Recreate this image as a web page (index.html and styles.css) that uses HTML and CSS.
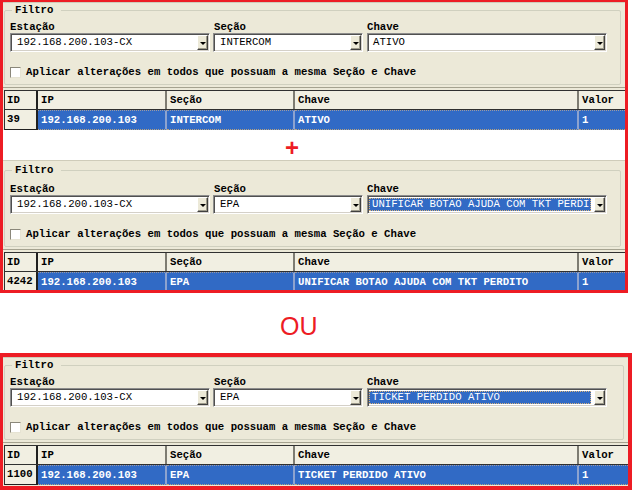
FILE: index.html
```html
<!DOCTYPE html>
<html lang="pt-BR">
<head>
<meta charset="utf-8">
<title>Filtro</title>
<link rel="stylesheet" href="styles.css">
</head>
<body>
<div class="frame frame-top">
  <section class="panel p1">
    <fieldset class="group">
      <legend>Filtro</legend>
      <div class="fields">
        <div class="field est">
          <span class="lbl">Estação</span>
          <div class="combo"><span class="val">192.168.200.103-CX</span><span class="arrow"></span></div>
        </div>
        <div class="field sec">
          <span class="lbl">Seção</span>
          <div class="combo"><span class="val">INTERCOM</span><span class="arrow"></span></div>
        </div>
        <div class="field chave">
          <span class="lbl">Chave</span>
          <div class="combo"><span class="val">ATIVO</span><span class="arrow"></span></div>
        </div>
      </div>
      <div class="check"><span class="box"></span><span>Aplicar alterações em todos que possuam a mesma Seção e Chave</span></div>
    </fieldset>
    <div class="gridwrap">
      <div class="row head"><span>ID</span><span>IP</span><span>Seção</span><span>Chave</span><span>Valor</span></div>
      <div class="row sel"><span>39</span><span>192.168.200.103</span><span>INTERCOM</span><span>ATIVO</span><span>1</span></div>
    </div>
  </section>
  <div class="gap"><span class="plus">+</span></div>
  <section class="panel p2">
    <fieldset class="group">
      <legend>Filtro</legend>
      <div class="fields">
        <div class="field est">
          <span class="lbl">Estação</span>
          <div class="combo"><span class="val">192.168.200.103-CX</span><span class="arrow"></span></div>
        </div>
        <div class="field sec">
          <span class="lbl">Seção</span>
          <div class="combo"><span class="val">EPA</span><span class="arrow"></span></div>
        </div>
        <div class="field chave">
          <span class="lbl">Chave</span>
          <div class="combo"><span class="val focus"><span class="hl">UNIFICAR BOTAO AJUDA COM TKT PERDI</span></span><span class="arrow"></span></div>
        </div>
      </div>
      <div class="check"><span class="box"></span><span>Aplicar alterações em todos que possuam a mesma Seção e Chave</span></div>
    </fieldset>
    <div class="gridwrap">
      <div class="row head"><span>ID</span><span>IP</span><span>Seção</span><span>Chave</span><span>Valor</span></div>
      <div class="row sel"><span>4242</span><span>192.168.200.103</span><span>EPA</span><span>UNIFICAR BOTAO AJUDA COM TKT PERDITO</span><span>1</span></div>
    </div>
  </section>
</div>
<div class="or">OU</div>
<div class="frame frame-bottom">
  <section class="panel p3">
    <fieldset class="group">
      <legend>Filtro</legend>
      <div class="fields">
        <div class="field est">
          <span class="lbl">Estação</span>
          <div class="combo"><span class="val">192.168.200.103-CX</span><span class="arrow"></span></div>
        </div>
        <div class="field sec">
          <span class="lbl">Seção</span>
          <div class="combo"><span class="val">EPA</span><span class="arrow"></span></div>
        </div>
        <div class="field chave">
          <span class="lbl">Chave</span>
          <div class="combo"><span class="val focus"><span class="hl">TICKET PERDIDO ATIVO</span></span><span class="arrow"></span></div>
        </div>
      </div>
      <div class="check"><span class="box"></span><span>Aplicar alterações em todos que possuam a mesma Seção e Chave</span></div>
    </fieldset>
    <div class="gridwrap">
      <div class="row head"><span>ID</span><span>IP</span><span>Seção</span><span>Chave</span><span>Valor</span></div>
      <div class="row sel"><span>1100</span><span>192.168.200.103</span><span>EPA</span><span>TICKET PERDIDO ATIVO</span><span>1</span></div>
    </div>
  </section>
</div>
</body>
</html>
```

FILE: styles.css
```css
* { box-sizing: border-box; }

body {
  margin: 0;
  width: 632px;
  height: 492px;
  overflow: hidden;
  background: #fff;
  font-family: "Liberation Mono", "Courier New", monospace;
  font-size: 8pt;
  color: #000;
}

.frame {
  border: 3px solid #ED1C24;
}
.frame-top {
  width: 628px;
  border-top-width: 2px;
}
.frame-bottom {
  width: 632px;
  border-width: 4px 4px 4px 3px;
}

.panel {
  background: #ECE9D8;
  border-top: 1px solid #CFCCBA;
  overflow: hidden;
}
.p1 { height: 128px; padding-top: 1px; }
.p2 { height: 130px; padding-top: 3px; }
.p3 { height: 129px; padding-top: 1px; }

.group {
  margin: 0 4px 0 1px;
  padding: 0 0 5px 5px;
  border: 1px solid #D0D0BF;
  border-radius: 2px;
  min-inline-size: 0;
}
.group legend {
  margin-left: 2px;
  padding: 0 8px 0 3px;
  line-height: 12px;
  font-weight: bold;
}

.fields {
  display: flex;
  margin-top: 5px;
}
.p2 .fields { margin-top: 7px; }

.field {
  display: flex;
  flex-direction: column;
}
.est { width: 200px; }
.sec { width: 150px; margin-left: 3px; }
.chave { width: 240px; margin-left: 4px; }

.lbl {
  line-height: 12px;
  font-weight: bold;
}
.sec .lbl { padding-left: 1px; }

.combo {
  display: flex;
  height: 19px;
  padding: 1px;
  background: #fff;
  border: 1px solid;
  border-color: #8C8C8C #fff #fff #8C8C8C;
  box-shadow: inset 1px 1px #505050, inset -1px -1px #D4D0C8;
}
.val {
  flex: 1;
  min-width: 0;
  padding-left: 5px;
  line-height: 15px;
  white-space: nowrap;
  overflow: hidden;
}
.chave .val { padding-left: 4px; }
.chave .val.focus {
  padding: 1px 3px 1px 0;
  line-height: 13px;
}
.hl {
  display: block;
  height: 13px;
  padding-left: 3px;
  background: #316AC5;
  color: #fff;
  outline: 1px dotted #D8B27A;
  outline-offset: -1px;
  overflow: hidden;
  white-space: nowrap;
}

.arrow {
  width: 11px;
  height: 15px;
  flex: none;
  display: flex;
  align-items: center;
  justify-content: center;
  background: #ECE9D8;
  border: 1px solid;
  border-color: #fff #404040 #404040 #fff;
  box-shadow: inset -1px -1px #9D9A8A;
}
.arrow::before {
  content: "";
  width: 0;
  height: 0;
  border-left: 3px solid transparent;
  border-right: 3px solid transparent;
  border-top: 3px solid #000;
  margin-top: 1px;
}

.check {
  display: flex;
  align-items: center;
  gap: 5px;
  margin-top: 14px;
  height: 13px;
  line-height: 13px;
  font-weight: bold;
  white-space: nowrap;
}
.box {
  width: 11px;
  height: 11px;
  background: #fff;
  border: 1px solid;
  border-color: #8A877A #E6E3D3 #E6E3D3 #8A877A;
}

.gridwrap {
  margin-top: 2px;
  border-top: 1px solid #A5A28F;
  padding: 2px 0 0 1px;
}

.row {
  display: grid;
  grid-template-columns: 33px 129px 128px 284px 1fr;
  font-weight: bold;
  border-left: 1px solid #303030;
}
.row > span {
  white-space: nowrap;
  overflow: hidden;
  padding-left: 3px;
}
.row > span:first-child { padding-left: 2px; }

.head {
  height: 20px;
  line-height: 18px;
  background: #F1EFE2;
  border-top: 1px solid #303030;
  border-bottom: 1px solid #303030;
}
.head > span { border-right: 2px solid #7E7C72; }
.head > span:first-child { border-right-color: #202020; }
.head > span:last-child { border-right: 0; }

.sel {
  height: 20px;
  line-height: 18px;
}
.sel > span {
  background: #316AC5;
  color: #fff;
  border-top: 1px dotted #9E9AA0;
  border-bottom: 1px dotted #B8A27E;
  border-right: 2px solid #8DA3CF;
}
.sel > span:last-child { border-right: 0; }
.sel > span:first-child {
  background: #F1EFE2;
  color: #000;
  border-top: 0;
  border-bottom: 1px solid #202020;
  border-right: 2px solid #202020;
  line-height: 19px;
}

.gap {
  height: 30px;
  background: #fff;
  padding: 6px 0 0 282px;
}
.plus {
  display: block;
  width: 20px;
  color: #ED1C24;
  font: bold 24px/24px "Liberation Sans", Arial, sans-serif;
}

.or {
  height: 60px;
  padding: 21px 0 0 280px;
  color: #ED1C24;
  font: 25px/25px "Liberation Sans", Arial, sans-serif;
}
```
